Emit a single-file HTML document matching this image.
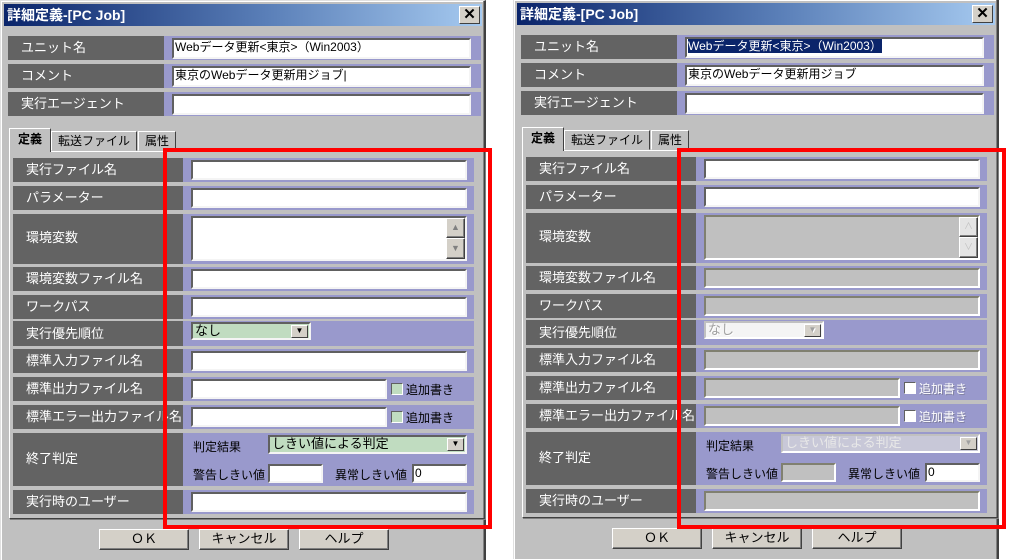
<!DOCTYPE html>
<html><head><meta charset="utf-8"><style>
*{margin:0;padding:0;box-sizing:border-box}
body{width:1020px;height:559px;background:#fff;position:relative;overflow:hidden;font-family:"Liberation Sans","Noto Sans CJK JP","IPAGothic",sans-serif;font-size:12px}
.dlg{position:absolute;top:0;width:486px;height:560px;background:#c0c0c0;border-left:1px solid #e0e0e0;border-top:1px solid #e0e0e0;border-right:2px solid #404040;box-shadow:inset -1px 0 #808080,inset 1px 1px #fff}
.dlg div,.dlg span{position:absolute}
.title{left:3px;top:3px;width:478px;height:22px;background:linear-gradient(90deg,#0a246a,#5a7fb8 55%,#a6caf0);color:#fff;font-weight:bold;font-size:14px;line-height:22px;padding-left:3px}
.x{right:2px;top:2px;width:21px;height:18px;background:#d4d0c8;border:1px solid;border-color:#fff #404040 #404040 #fff;color:#000;font-size:15px;line-height:15px;text-align:center;font-weight:bold}
.lab{background:#636363;color:#fff;font-size:13px;line-height:24px;padding-left:13px;white-space:nowrap;overflow:hidden}
.blu{background:#9999cc}
.in{background:#fff;border:2px solid;border-color:#606060 #f4f4f4 #f4f4f4 #606060;font-size:12px;line-height:15px;padding-left:1px;white-space:nowrap;overflow:hidden}
.dis{background:#c0c0c0;border-color:#808070 #fff #fff #808070}
.tab{height:23px;background:#c0c0c0;border:1px solid;border-color:#fff #404040 transparent #fff;font-size:12px;line-height:20px;text-align:center}
.panel{border:1px solid;border-color:#fff #404040 #404040 #fff;box-shadow:1px 1px #808080}
.btn{width:90px;height:21px;background:#d4d0c8;border:1px solid;border-color:#fff #404040 #404040 #fff;box-shadow:inset -1px -1px #808080;text-align:center;font-size:13px;line-height:18px}
.sel{background:#c0dcc0;border:2px solid;border-color:#606060 #f4f4f4 #f4f4f4 #606060;font-size:13px;line-height:14px;padding-left:2px}
.dd{right:1px;top:1px;width:17px;height:13px;background:#d4d0c8;border:1px solid;border-color:#fff #404040 #404040 #fff;font-size:8px;line-height:10px;text-align:center}
.t{font-size:12px;color:#000;white-space:nowrap}
.cb{width:12px;height:12px;background:#c0dcc0;border:1px solid;border-color:#606060 #fff #fff #606060}
.red{position:absolute;border:4px solid #f00;width:329px;height:381px;top:148px}
.gl{color:#a0a0a0;text-shadow:1px 1px #fff}
</style></head><body>

<!-- LEFT -->
<div class="dlg" style="left:0">
<div class="title">詳細定義-[PC Job]<div class="x">✕</div></div>
<div class="lab" style="left:7px;top:35px;width:156px;height:24px">ユニット名</div><div class="blu" style="left:163px;top:35px;width:317px;height:24px"></div><div class="in" style="left:171px;top:37px;width:299px;height:21px">Webデータ更新&lt;東京&gt;（Win2003）</div>
<div class="lab" style="left:7px;top:63px;width:156px;height:24px">コメント</div><div class="blu" style="left:163px;top:63px;width:317px;height:24px"></div><div class="in" style="left:171px;top:65px;width:299px;height:21px">東京のWebデータ更新用ジョブ|</div>
<div class="lab" style="left:7px;top:91px;width:156px;height:24px">実行エージェント</div><div class="blu" style="left:163px;top:91px;width:317px;height:24px"></div><div class="in" style="left:171px;top:93px;width:299px;height:21px"></div>
<div class="panel" style="left:8px;top:150px;width:476px;height:368px"></div>
<div class="tab" style="left:8px;top:127px;width:42px;font-weight:bold;border-bottom:none;height:24px">定義</div>
<div class="tab" style="left:50px;top:130px;width:86px;height:20px;line-height:18px">転送ファイル</div>
<div class="tab" style="left:137px;top:130px;width:38px;height:20px;line-height:18px">属性</div>

<div class="lab" style="left:12px;top:157px;width:170px;height:24px">実行ファイル名</div><div class="blu" style="left:182px;top:157px;width:291px;height:24px"></div><div class="in" style="left:190px;top:159px;width:276px;height:20px"></div>
<div class="lab" style="left:12px;top:185px;width:170px;height:24px">パラメーター</div><div class="blu" style="left:182px;top:185px;width:291px;height:24px"></div><div class="in" style="left:190px;top:187px;width:276px;height:20px"></div>
<div class="lab" style="left:12px;top:213px;width:170px;height:50px;line-height:48px">環境変数</div><div class="blu" style="left:182px;top:213px;width:291px;height:50px"></div><div class="in" style="left:190px;top:215px;width:276px;height:45px"><div class="btn" style="right:0;top:0;width:19px;height:20px;font-size:9px;line-height:16px;color:#808080">▲</div><div class="btn" style="right:0;top:20px;width:19px;height:21px;font-size:9px;line-height:18px;color:#808080">▼</div></div>
<div class="lab" style="left:12px;top:266px;width:170px;height:24px">環境変数ファイル名</div><div class="blu" style="left:182px;top:266px;width:291px;height:24px"></div><div class="in" style="left:190px;top:268px;width:276px;height:20px"></div>
<div class="lab" style="left:12px;top:294px;width:170px;height:24px">ワークパス</div><div class="blu" style="left:182px;top:294px;width:291px;height:24px"></div><div class="in" style="left:190px;top:296px;width:276px;height:20px"></div>
<div class="lab" style="left:12px;top:320px;width:170px;height:25px;line-height:26px">実行優先順位</div><div class="blu" style="left:182px;top:320px;width:291px;height:25px"></div><div class="sel" style="left:190px;top:321px;width:120px;height:18px">なし<div class="dd">▼</div></div>
<div class="lab" style="left:12px;top:348px;width:170px;height:24px">標準入力ファイル名</div><div class="blu" style="left:182px;top:348px;width:291px;height:24px"></div><div class="in" style="left:190px;top:350px;width:276px;height:20px"></div>
<div class="lab" style="left:12px;top:376px;width:170px;height:24px">標準出力ファイル名</div><div class="blu" style="left:182px;top:376px;width:291px;height:24px"></div><div class="in" style="left:190px;top:378px;width:196px;height:20px"></div><div class="cb" style="left:390px;top:382px"></div><span class="t" style="left:405px;top:380px">追加書き</span>
<div class="lab" style="left:12px;top:404px;width:170px;height:24px">標準エラー出力ファイル名</div><div class="blu" style="left:182px;top:404px;width:291px;height:24px"></div><div class="in" style="left:190px;top:406px;width:196px;height:20px"></div><div class="cb" style="left:390px;top:410px"></div><span class="t" style="left:405px;top:408px">追加書き</span>
<div class="lab" style="left:12px;top:432px;width:170px;height:53px;line-height:52px">終了判定</div><div class="blu" style="left:182px;top:432px;width:291px;height:53px"></div>
<span class="t" style="left:192px;top:437px">判定結果</span><div class="sel" style="left:267px;top:434px;width:199px;height:19px">しきい値による判定<div class="dd">▼</div></div>
<span class="t" style="left:192px;top:465px">警告しきい値</span><div class="in" style="left:267px;top:463px;width:55px;height:19px"></div>
<span class="t" style="left:334px;top:465px">異常しきい値</span><div class="in" style="left:411px;top:463px;width:55px;height:19px">0</div>
<div class="lab" style="left:12px;top:489px;width:170px;height:24px">実行時のユーザー</div><div class="blu" style="left:182px;top:489px;width:291px;height:24px"></div><div class="in" style="left:190px;top:491px;width:276px;height:20px"></div>
<div class="btn" style="left:98px;top:528px">ＯＫ</div>
<div class="btn" style="left:198px;top:528px">キャンセル</div>
<div class="btn" style="left:298px;top:528px">ヘルプ</div>
</div>

<!-- RIGHT -->
<div class="dlg" style="left:513px;top:-1px">
<div class="title">詳細定義-[PC Job]<div class="x">✕</div></div>
<div class="lab" style="left:7px;top:35px;width:156px;height:24px">ユニット名</div><div class="blu" style="left:163px;top:35px;width:317px;height:24px"></div><div class="in" style="left:171px;top:37px;width:299px;height:21px"><span style="position:static;background:#0a246a;color:#fff">Webデータ更新&lt;東京&gt;（Win2003）</span></div>
<div class="lab" style="left:7px;top:63px;width:156px;height:24px">コメント</div><div class="blu" style="left:163px;top:63px;width:317px;height:24px"></div><div class="in" style="left:171px;top:65px;width:299px;height:21px">東京のWebデータ更新用ジョブ</div>
<div class="lab" style="left:7px;top:91px;width:156px;height:24px">実行エージェント</div><div class="blu" style="left:163px;top:91px;width:317px;height:24px"></div><div class="in" style="left:171px;top:93px;width:299px;height:21px"></div>
<div class="panel" style="left:8px;top:150px;width:476px;height:368px"></div>
<div class="tab" style="left:8px;top:127px;width:42px;font-weight:bold;border-bottom:none;height:24px">定義</div>
<div class="tab" style="left:50px;top:130px;width:86px;height:20px;line-height:18px">転送ファイル</div>
<div class="tab" style="left:137px;top:130px;width:38px;height:20px;line-height:18px">属性</div>

<div class="lab" style="left:12px;top:157px;width:170px;height:24px">実行ファイル名</div><div class="blu" style="left:182px;top:157px;width:291px;height:24px"></div><div class="in" style="left:190px;top:159px;width:276px;height:20px"></div>
<div class="lab" style="left:12px;top:185px;width:170px;height:24px">パラメーター</div><div class="blu" style="left:182px;top:185px;width:291px;height:24px"></div><div class="in" style="left:190px;top:187px;width:276px;height:20px"></div>
<div class="lab" style="left:12px;top:213px;width:170px;height:50px;line-height:48px">環境変数</div><div class="blu" style="left:182px;top:213px;width:291px;height:50px"></div><div class="in dis" style="left:190px;top:215px;width:276px;height:45px"><div class="btn" style="right:0;top:0;width:19px;height:20px;font-size:9px;line-height:16px;color:#c0c0c0;background:#e4e4e4">∧</div><div class="btn" style="right:0;top:20px;width:19px;height:21px;font-size:9px;line-height:18px;color:#c0c0c0;background:#e4e4e4">∨</div></div>
<div class="lab" style="left:12px;top:266px;width:170px;height:24px">環境変数ファイル名</div><div class="blu" style="left:182px;top:266px;width:291px;height:24px"></div><div class="in dis" style="left:190px;top:268px;width:276px;height:20px"></div>
<div class="lab" style="left:12px;top:294px;width:170px;height:24px">ワークパス</div><div class="blu" style="left:182px;top:294px;width:291px;height:24px"></div><div class="in dis" style="left:190px;top:296px;width:276px;height:20px"></div>
<div class="lab" style="left:12px;top:320px;width:170px;height:25px;line-height:26px">実行優先順位</div><div class="blu" style="left:182px;top:320px;width:291px;height:25px"></div><div class="sel gl" style="left:190px;top:321px;width:120px;height:18px;background:#f4f4f4;border-color:#c0c0c0 #fff #fff #c0c0c0">なし<div class="dd" style="color:#a0a0a0">▼</div></div>
<div class="lab" style="left:12px;top:348px;width:170px;height:24px">標準入力ファイル名</div><div class="blu" style="left:182px;top:348px;width:291px;height:24px"></div><div class="in dis" style="left:190px;top:350px;width:276px;height:20px"></div>
<div class="lab" style="left:12px;top:376px;width:170px;height:24px">標準出力ファイル名</div><div class="blu" style="left:182px;top:376px;width:291px;height:24px"></div><div class="in dis" style="left:190px;top:378px;width:196px;height:20px"></div><div class="cb" style="left:390px;top:382px;background:#fff"></div><span class="t" style="left:405px;top:380px;color:#fff;text-shadow:1px 1px #8080a0">追加書き</span>
<div class="lab" style="left:12px;top:404px;width:170px;height:24px">標準エラー出力ファイル名</div><div class="blu" style="left:182px;top:404px;width:291px;height:24px"></div><div class="in dis" style="left:190px;top:406px;width:196px;height:20px"></div><div class="cb" style="left:390px;top:410px;background:#fff"></div><span class="t" style="left:405px;top:408px;color:#fff;text-shadow:1px 1px #8080a0">追加書き</span>
<div class="lab" style="left:12px;top:432px;width:170px;height:53px;line-height:52px">終了判定</div><div class="blu" style="left:182px;top:432px;width:291px;height:53px"></div>
<span class="t" style="left:192px;top:437px">判定結果</span><div class="sel" style="left:267px;top:434px;width:199px;height:19px;background:#c8c8d8;border-color:#c0c0c0 #fff #fff #c0c0c0;color:#e8e8e8">しきい値による判定<div class="dd" style="color:#a0a0a0">▼</div></div>
<span class="t" style="left:192px;top:465px">警告しきい値</span><div class="in dis" style="left:267px;top:463px;width:55px;height:19px"></div>
<span class="t" style="left:334px;top:465px">異常しきい値</span><div class="in" style="left:411px;top:463px;width:55px;height:19px">0</div>
<div class="lab" style="left:12px;top:489px;width:170px;height:24px">実行時のユーザー</div><div class="blu" style="left:182px;top:489px;width:291px;height:24px"></div><div class="in dis" style="left:190px;top:491px;width:276px;height:20px"></div>
<div class="btn" style="left:98px;top:528px">ＯＫ</div>
<div class="btn" style="left:198px;top:528px">キャンセル</div>
<div class="btn" style="left:298px;top:528px">ヘルプ</div>
</div>

<div class="red" style="left:163px"></div>
<div class="red" style="left:677px"></div>
</body></html>
